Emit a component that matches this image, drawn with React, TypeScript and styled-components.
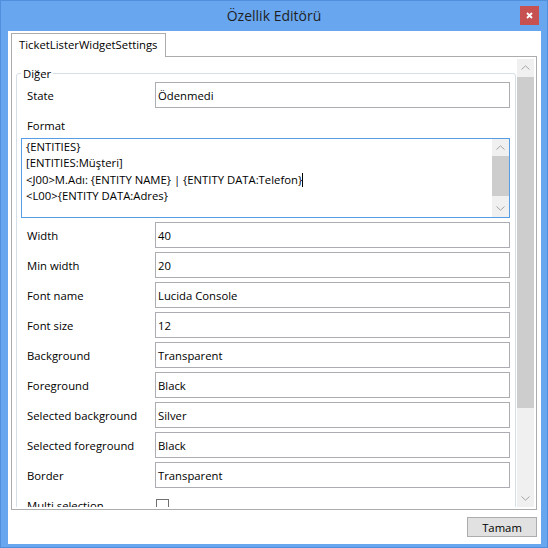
import React from "react";
import styled, { createGlobalStyle } from "styled-components";

const Global = createGlobalStyle`
  html, body { margin: 0; padding: 0; background: #fff; overflow: hidden; }
  * { box-sizing: border-box; }
  body { font-family: "Open Sans", "Noto Sans", sans-serif; color: #000; }
`;

const Window = styled.div`
  width: 548px;
  height: 548px;
  background: #68a7f0;
  border: 1px solid #4f8fdc;
  display: flex;
  flex-direction: column;
`;

const TitleBar = styled.div`
  height: 30px;
  display: grid;
  grid-template-columns: 1fr auto 1fr;
`;

const Title = styled.div`
  grid-column: 2;
  line-height: 30px;
  font-size: 14px;
  color: #1f1f1f;
  white-space: nowrap;
`;

const CloseButton = styled.div`
  grid-column: 3;
  justify-self: end;
  width: 19px;
  height: 19px;
  margin: 5px 8px 0 0;
  background: #c75050;
  display: flex;
  align-items: center;
  justify-content: center;
`;

const Client = styled.div`
  flex: 1;
  background: #fff;
  margin: 0 6px 3px 7px;
  padding: 2px 4px 7px 3px;
  display: flex;
  flex-direction: column;
  min-height: 0;
`;

const TabStrip = styled.div`
  display: flex;
  height: 23px;
`;

const Tab = styled.div`
  position: relative;
  z-index: 1;
  height: 24px;
  margin-bottom: -1px;
  padding: 0 7px;
  border: 1px solid #acacac;
  border-bottom: none;
  background: #fff;
  font-size: 11.3px;
  line-height: 22px;
  white-space: nowrap;
`;

const Panel = styled.div`
  flex: 1;
  min-height: 0;
  border: 1px solid #acacac;
  padding: 2px;
  display: flex;
`;

const ScrollContent = styled.div`
  flex: 1;
  min-width: 0;
  overflow: hidden;
  padding: 0 1px 0 2px;
`;

const GroupBox = styled.fieldset`
  margin: 7px 0 0 0;
  border: 1px solid #d5dfe5;
  border-radius: 3px;
  padding: 1px 5px 8px 4px;
  min-inline-size: 0;
`;

const Legend = styled.legend`
  padding: 0 2px;
  font-size: 11.3px;
  line-height: 15px;
`;

const Fields = styled.div`
  display: grid;
  grid-template-columns: 134px 1fr;
  row-gap: 4px;
`;

const Label = styled.div`
  height: 26px;
  display: flex;
  align-items: center;
  padding-left: 6px;
  font-size: 11.3px;
  white-space: nowrap;
`;

const WideLabel = styled.div`
  grid-column: 1 / -1;
  height: 22px;
  padding: 6px 0 0 6px;
  font-size: 11.3px;
  line-height: 16px;
`;

const TextBox = styled.div`
  height: 26px;
  border: 1px solid #abadb3;
  padding: 0 2px;
  display: flex;
  align-items: center;
  font-size: 11.3px;
  white-space: nowrap;
`;

const CheckCell = styled.div`
  height: 26px;
  display: flex;
  align-items: center;
`;

const CheckBox = styled.div`
  width: 13px;
  height: 13px;
  margin-left: 1px;
  border: 1px solid #707070;
  background: #fff;
`;

const TextArea = styled.div`
  grid-column: 1 / -1;
  height: 80px;
  border: 1px solid #569de5;
  display: flex;
`;

const TextLines = styled.div`
  flex: 1;
  padding: 0 4px;
  font-size: 11.3px;
  line-height: 16.3px;
  white-space: pre;
  overflow: hidden;
`;

const Caret = styled.span`
  display: inline-block;
  width: 1px;
  height: 14px;
  background: #000;
  vertical-align: -3px;
`;

const ScrollBar = styled.div`
  width: 17px;
  flex: none;
  background: #f0f0f0;
  display: flex;
  flex-direction: column;
`;

const ArrowButton = styled.div`
  height: 17px;
  flex: none;
  display: flex;
  align-items: center;
  justify-content: center;
`;

const Thumb = styled.div<{ $size: number; $offset: number }>`
  height: ${(p) => p.$size}px;
  margin-top: ${(p) => p.$offset}px;
  flex: none;
  background: #cdcdcd;
`;

const Track = styled.div`
  flex: 1;
`;

const Footer = styled.div`
  margin-top: 7px;
  display: flex;
  justify-content: flex-end;
`;

const Button = styled.div`
  width: 70px;
  height: 20px;
  background: #e1e1e1;
  border: 1px solid #adadad;
  display: flex;
  align-items: center;
  justify-content: center;
  font-size: 11.3px;
`;

const Chevron = ({ up }: { up?: boolean }) => (
  <svg width="9" height="5" viewBox="0 0 9 5">
    <polyline
      points={up ? "0.5,4.5 4.5,0.8 8.5,4.5" : "0.5,0.5 4.5,4.2 8.5,0.5"}
      fill="none"
      stroke="#a6a6a6"
      strokeWidth="1"
    />
  </svg>
);

const VScroll = ({ thumb, offset }: { thumb: number; offset: number }) => (
  <ScrollBar>
    <ArrowButton>
      <Chevron up />
    </ArrowButton>
    <Thumb $size={thumb} $offset={offset} />
    <Track />
    <ArrowButton>
      <Chevron />
    </ArrowButton>
  </ScrollBar>
);

const rows: [string, string][] = [
  ["Width", "40"],
  ["Min width", "20"],
  ["Font name", "Lucida Console"],
  ["Font size", "12"],
  ["Background", "Transparent"],
  ["Foreground", "Black"],
  ["Selected background", "Silver"],
  ["Selected foreground", "Black"],
  ["Border", "Transparent"],
];

export default function App() {
  return (
    <>
      <Global />
      <Window>
        <TitleBar>
          <Title>Özellik Editörü</Title>
          <CloseButton>
            <svg width="7" height="7" viewBox="0 0 7 7">
              <path d="M1 1 L6 6 M6 1 L1 6" stroke="#fff" strokeWidth="1.8" />
            </svg>
          </CloseButton>
        </TitleBar>
        <Client>
          <TabStrip>
            <Tab>TicketListerWidgetSettings</Tab>
          </TabStrip>
          <Panel>
            <ScrollContent>
              <GroupBox>
                <Legend>Diğer</Legend>
                <Fields>
                  <Label>State</Label>
                  <TextBox>Ödenmedi</TextBox>
                  <WideLabel>Format</WideLabel>
                  <TextArea>
                    <TextLines>
                      {"{ENTITIES}\n[ENTITIES:Müşteri]\n<J00>M.Adı: {ENTITY NAME} | {ENTITY DATA:Telefon}"}
                      <Caret />
                      {"\n<L00>{ENTITY DATA:Adres}"}
                    </TextLines>
                    <VScroll thumb={40} offset={0} />
                  </TextArea>
                  {rows.map(([k, v]) => (
                    <React.Fragment key={k}>
                      <Label>{k}</Label>
                      <TextBox>{v}</TextBox>
                    </React.Fragment>
                  ))}
                  <Label>Multi selection</Label>
                  <CheckCell>
                    <CheckBox />
                  </CheckCell>
                </Fields>
              </GroupBox>
            </ScrollContent>
            <VScroll thumb={331} offset={1} />
          </Panel>
          <Footer>
            <Button>Tamam</Button>
          </Footer>
        </Client>
      </Window>
    </>
  );
}
